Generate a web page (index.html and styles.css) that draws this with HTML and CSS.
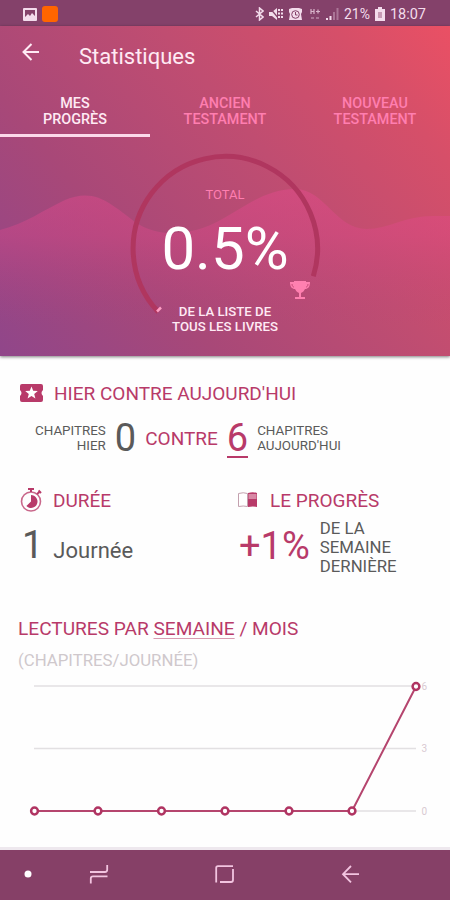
FILE: index.html
```html
<!DOCTYPE html>
<html lang="fr">
  <head>
    <meta charset="UTF-8" />
    <meta name="viewport" content="width=device-width, initial-scale=1.0" />
    <title>Statistiques</title>
    <link rel="stylesheet" href="styles.css">
  </head>
  <body>
    <div class="status-bar">
      <div class="status-left">
        <svg width="14" height="13" viewBox="0 0 14 13">
          <rect width="14" height="13" rx="1" fill="#f3dcec" />
          <path d="M2 2h10v6l-3-3-2 3-2-2-3 3z" fill="#84416a" />
        </svg>
        <span class="app-badge"></span>
      </div>
      <div class="status-right">
        <svg width="9" height="14" viewBox="0 0 9 14">
          <path d="M1 4l7 6-3.500 3V1L8 4l-7 6" fill="none" stroke="#f3dcec" stroke-width="1.500" />
        </svg>
        <svg class="icon-mute" width="15" height="12" viewBox="0 0 15 12">
          <path d="M0 4h3l5-4v12L3 8H0z" fill="#f3dcec" />
          <path d="M1 0l9 11" stroke="#84416a" stroke-width="1.200" />
          <path d="M10 1v10M13 1v10" stroke="#f3dcec" stroke-width="2" stroke-dasharray="2 1.500" />
        </svg>
        <svg class="icon-alarm" width="13" height="13" viewBox="0 0 13 13">
          <path d="M0 1l3-1h7l3 1v3l-1 2 1 6H0l1-6-1-2z" fill="#f3dcec" />
          <circle cx="6.500" cy="6.500" r="3.800" fill="#f3dcec" stroke="#84416a" />
          <path d="M6.500 4v3h2" fill="none" stroke="#84416a" />
        </svg>
        <svg class="icon-data" width="10" height="13" viewBox="0 0 10 13">
          <path d="M1 1v5M4 1v5M1 3.500h3M6 3.500h4M8 1.500v4" stroke="#d9b5cb" stroke-width="1.200" />
          <path d="M1 10h3M6 10h3" stroke="#aa7596" stroke-width="2" />
        </svg>
        <svg class="icon-signal" width="13" height="12" viewBox="0 0 13 12">
          <path d="M1 10v2M4.500 8v4" stroke="#f3dcec" stroke-width="2" />
          <path d="M8 4v8M11.500 0v12" stroke="#aa7596" stroke-width="2" />
        </svg>
        <span class="percent">21%</span>
        <svg class="icon-battery" width="10" height="14" viewBox="0 0 10 14">
          <path d="M3 0h4v2h3v12H0V2h3z" fill="#f3dcec" />
          <path d="M3 5h4v6H3z" fill="#c79bb5" />
        </svg>
        <span class="clock">18:07</span>
      </div>
    </div>

    <header class="hero">
      <svg class="waves" width="450" height="330" viewBox="0 26 450 330">
        <defs>
          <linearGradient id="wave" gradientUnits="userSpaceOnUse" x1="0" y1="188" x2="0" y2="325">
            <stop offset="0" stop-color="#e84a90" stop-opacity="0.420" />
            <stop offset="0.350" stop-color="#e0488c" stop-opacity="0.360" />
            <stop offset="1" stop-color="#b84080" stop-opacity="0" />
          </linearGradient>
        </defs>
        <path d="M0 230C25 224 45 209 65 200C82 193 96 194 112 205C132 218 140 231 168 233C225 235 245 190 295 189C325 189 335 229 367 229C388 229 405 216 433 216H450V356H0Z" fill="url(#wave)" />
      </svg>

      <div class="app-bar">
        <svg width="18" height="18" viewBox="0 0 18 18">
          <path d="M17 9H2M9.500 1L1.500 9l8 8" fill="none" stroke="#ffeaf4" stroke-width="2" />
        </svg>
        <h1>Statistiques</h1>
      </div>

      <nav class="tabs">
        <a href="#" class="active">MES<br>PROGRÈS</a>
        <a href="#">ANCIEN<br>TESTAMENT</a>
        <a href="#">NOUVEAU<br>TESTAMENT</a>
      </nav>

      <div class="gauge">
        <svg class="gauge-ring" width="200" height="200" viewBox="125 148 200 200">
          <path d="M158.300 312A92.200 92.200 0 1 1 313.300 276.200" fill="none" stroke="#b0365f" stroke-width="5" />
          <path d="M157 311.500l4-4" stroke="#ff9fc4" stroke-width="2.500" />
          <path d="M294 281h12v1h4c0 5-2 7-5 7-1 2-2 3-4 4v4h4v2h-10v-2h4v-4c-2-1-3-2-4-4-3 0-5-2-5-7h4z" fill="#ff80b0" />
          <path d="M292 284c0 2 1 3 2 3M308 284c0 2-1 3-2 3" fill="none" stroke="#c84a78" />
        </svg>
        <div class="gauge-label">TOTAL</div>
        <div class="gauge-value">0.5%</div>
        <div class="gauge-note">DE LA LISTE DE<br>TOUS LES LIVRES</div>
      </div>
    </header>

    <main>
      <section class="compare">
        <h2>
          <svg width="23" height="18" viewBox="0 0 23 18">
            <path d="M2 0h19q2 0 2 2v4q-3 3 0 6v4q0 2-2 2H2q-2 0-2-2v-4q3-3 0-6V2q0-2 2-2z" fill="#b83a69" />
            <path d="M11.500 2.500l1.700 4.300 4.600.3-3.600 2.900 1.200 4.500-3.900-2.500-3.900 2.500 1.200-4.500-3.600-2.900 4.600-.3z" fill="#fff" />
          </svg>
          <span>HIER CONTRE AUJOURD'HUI</span>
        </h2>
        <div class="compare-row">
          <span class="caption right">CHAPITRES<br>HIER</span>
          <span class="number">0</span>
          <span class="versus">CONTRE</span>
          <span class="number today">6</span>
          <span class="caption">CHAPITRES<br>AUJOURD'HUI</span>
        </div>
      </section>

      <div class="columns">
        <section>
          <h2>
            <svg width="23" height="24" viewBox="0 0 23 24">
              <circle cx="11" cy="13.500" r="9.500" fill="none" stroke="#c9688b" stroke-width="1.600" />
              <path d="M8 1h6M11 1v3M17 6l3-2.500M18.500 2.500l2.500 2.500" stroke="#b83a69" stroke-width="2" />
              <path d="M11 7a6.500 6.500 0 1 1-4.600 11.100L11 13.500z" fill="#b83a69" />
            </svg>
            <span>DURÉE</span>
          </h2>
          <div class="duration">
            <span class="number">1</span>
            <span class="unit">Journée</span>
          </div>
        </section>
        <section>
          <h2 class="progress-title">
            <svg width="20" height="16" viewBox="0 0 20 16">
              <path d="M.5 1.500q5-1.500 9 0v13q-4-1-9 0z" fill="#fff" stroke="#c3a0ae" />
              <path d="M10 1q5-1.500 9 0v14q-4-1-9 0z" fill="#b83a69" />
              <path d="M10.500 2h8v5h-8z" fill="#d888a5" />
            </svg>
            <span>LE PROGRÈS</span>
          </h2>
          <div class="progress">
            <span class="number">+1%</span>
            <span class="period">DE LA<br>SEMAINE<br>DERNIÈRE</span>
          </div>
        </section>
      </div>

      <section class="readings">
        <h2>LECTURES PAR <span class="selected">SEMAINE</span> / MOIS</h2>
        <p>(CHAPITRES/JOURNÉE)</p>
        <svg class="chart" width="450" height="150" viewBox="0 675 450 150">
          <g class="grid">
            <path d="M34 686H416M34 748.500H416M34 811H416" />
          </g>
          <path class="line" d="M34.500 811H352L416 686.500" />
          <g class="dots">
            <circle cx="34.500" cy="811" r="3.400" />
            <circle cx="98" cy="811" r="3.400" />
            <circle cx="161.500" cy="811" r="3.400" />
            <circle cx="225" cy="811" r="3.400" />
            <circle cx="289" cy="811" r="3.400" />
            <circle cx="352" cy="811" r="3.400" />
            <circle cx="416" cy="686.500" r="3.400" />
          </g>
          <g class="ticks">
            <text x="421.500" y="689.500">6</text>
            <text x="421.500" y="752">3</text>
            <text x="421.500" y="814.500">0</text>
          </g>
        </svg>
      </section>
    </main>

    <footer class="nav-bar">
      <svg width="450" height="50" viewBox="0 850 450 50">
        <circle cx="28" cy="874" r="3.500" fill="#fff" />
        <g fill="none" stroke="#f2c4e0" stroke-width="1.800">
          <path d="M90 872h15q2.200 0 2.200-2.200V865M107.500 876.300H93q-2.200 0-2.200 2.200v5" />
          <path d="M233 866.200h-15q-1.800 0-1.800 1.800v14.500M220 882h11q2 0 2-2v-11" />
          <path d="M359 874.200h-16M351 866l-8 8.200 8 8.200" />
        </g>
      </svg>
    </footer>
  </body>
</html>
```

FILE: styles.css
```css
body,
html {
  margin: 0;
  padding: 0;
}

body {
  width: 450px;
  height: 900px;
  display: flex;
  flex-direction: column;
  font-family: Roboto, sans-serif;
  background-color: #fefefe;
  color: #5a5a5a;
  overflow: hidden;
}

h1,
h2,
p {
  margin: 0;
  font-weight: normal;
}

svg {
  display: block;
  flex-shrink: 0;
}

.status-bar {
  height: 26px;
  box-sizing: border-box;
  padding: 2px 24px 0 23px;
  display: flex;
  justify-content: space-between;
  align-items: center;
  background-color: #84416a;
  color: #f3dcec;
  font-size: 14px;
}

.status-left,
.status-right {
  display: flex;
  align-items: center;
}

.app-badge {
  width: 16px;
  height: 16px;
  margin-left: 5px;
  border-radius: 3px;
  background-color: #ff6500;
}

.icon-mute {
  margin-left: 5px;
}

.icon-alarm {
  margin-left: 5px;
}

.icon-data {
  margin-left: 8px;
}

.icon-signal {
  margin-left: 6px;
}

.percent {
  margin-left: 5px;
}

.icon-battery {
  margin: 0 5px 0 5px;
}

.clock {
  font-size: 14.500px;
}

.hero {
  position: relative;
  height: 330px;
  background: linear-gradient(50deg, #90468a 0%, #a84878 30%, #c04d71 60%, #d64f69 84%, #ea5064 100%);
  box-shadow: 0 1px 3px rgba(0, 0, 0, 0.5);
  color: #ffeaf4;
}

.waves {
  position: absolute;
  top: 0;
  left: 0;
}

.app-bar {
  position: relative;
  height: 62px;
  box-sizing: border-box;
  padding: 17px 22px 0;
  display: flex;
  align-items: flex-start;
}

.app-bar h1 {
  margin-left: 39px;
  font-size: 22px;
  line-height: 27px;
}

.tabs {
  position: relative;
  height: 49px;
  display: flex;
}

.tabs a {
  flex: 1;
  box-sizing: border-box;
  padding-top: 8px;
  border-bottom: 3px solid transparent;
  text-align: center;
  text-decoration: none;
  font-size: 14.400px;
  font-weight: 500;
  line-height: 16px;
  color: #ff7eb0;
}

.tabs a.active {
  color: #ffeaf4;
  border-bottom-color: #fbd9ea;
}

.gauge {
  position: relative;
  width: 200px;
  height: 200px;
  margin: 11px auto 0;
  text-align: center;
}

.gauge-ring {
  position: absolute;
  top: 0;
  left: 0;
}

.gauge-label {
  padding-top: 39px;
  font-size: 13px;
  line-height: 16px;
  color: #ff7eb0;
}

.gauge-value {
  position: relative;
  font-size: 60px;
  line-height: 70px;
  margin-top: 11px;
  color: #fff;
}

.gauge-note {
  position: relative;
  margin-top: 20px;
  font-size: 13.200px;
  font-weight: 500;
  line-height: 15px;
}

main {
  flex: 1;
}

h2 {
  display: flex;
  align-items: center;
  height: 24px;
  font-size: 19px;
  color: #b83a69;
}

.compare {
  padding: 25px 20px 0;
}

.compare h2 span {
  margin-left: 11px;
}

.compare-row {
  display: flex;
  align-items: center;
  height: 50px;
  margin-top: 8px;
  padding-left: 15px;
}

.caption {
  font-size: 13.400px;
  line-height: 15.500px;
}

.right {
  text-align: right;
}

.number {
  font-size: 38px;
  line-height: 44px;
}

.compare-row .number {
  margin-left: 9px;
}

.versus {
  margin-left: 9px;
  font-size: 19px;
  color: #b83a69;
}

.compare-row .today {
  margin-right: 9px;
  margin-top: 2px;
  line-height: 36px;
  border-bottom: 2px solid #b83a69;
  color: #b83a69;
}

.columns {
  display: grid;
  grid-template-columns: 218px 1fr;
  padding: 25px 20px 0;
}

.columns h2 span {
  margin-left: 10px;
}

.columns .progress-title span {
  margin-left: 12px;
}

.duration {
  display: flex;
  align-items: baseline;
  padding: 11px 0 0 2px;
}

.unit {
  margin-left: 10px;
  font-size: 22px;
}

.progress {
  display: flex;
  align-items: center;
  padding-top: 7px;
}

.progress .number {
  margin-left: 1px;
  margin-bottom: 3px;
  color: #b83a69;
}

.period {
  margin-left: 10px;
  font-size: 16.800px;
  line-height: 19px;
}

.readings h2 {
  display: block;
  padding-left: 18px;
  font-size: 19.100px;
  line-height: 24px;
}

.readings {
  padding-top: 41px;
}

.selected {
  text-decoration: underline;
  text-decoration-color: #d89bb1;
  text-underline-offset: 3px;
}

.readings p {
  margin-top: 7px;
  padding-left: 18px;
  font-size: 16.800px;
  line-height: 24px;
  color: #cfc8cc;
}

.chart {
  margin-top: 3px;
}

.grid path {
  stroke: #e2e0e2;
  stroke-width: 1.500;
}

.line {
  fill: none;
  stroke: #b5456e;
  stroke-width: 2;
}

.dots circle {
  fill: #fff;
  stroke: #b03462;
  stroke-width: 2.500;
}

.ticks text {
  font-size: 10px;
  fill: #d9cad2;
}

.nav-bar {
  height: 50px;
  border-top: 3px solid #eee8ee;
  background-color: #864067;
}
```
